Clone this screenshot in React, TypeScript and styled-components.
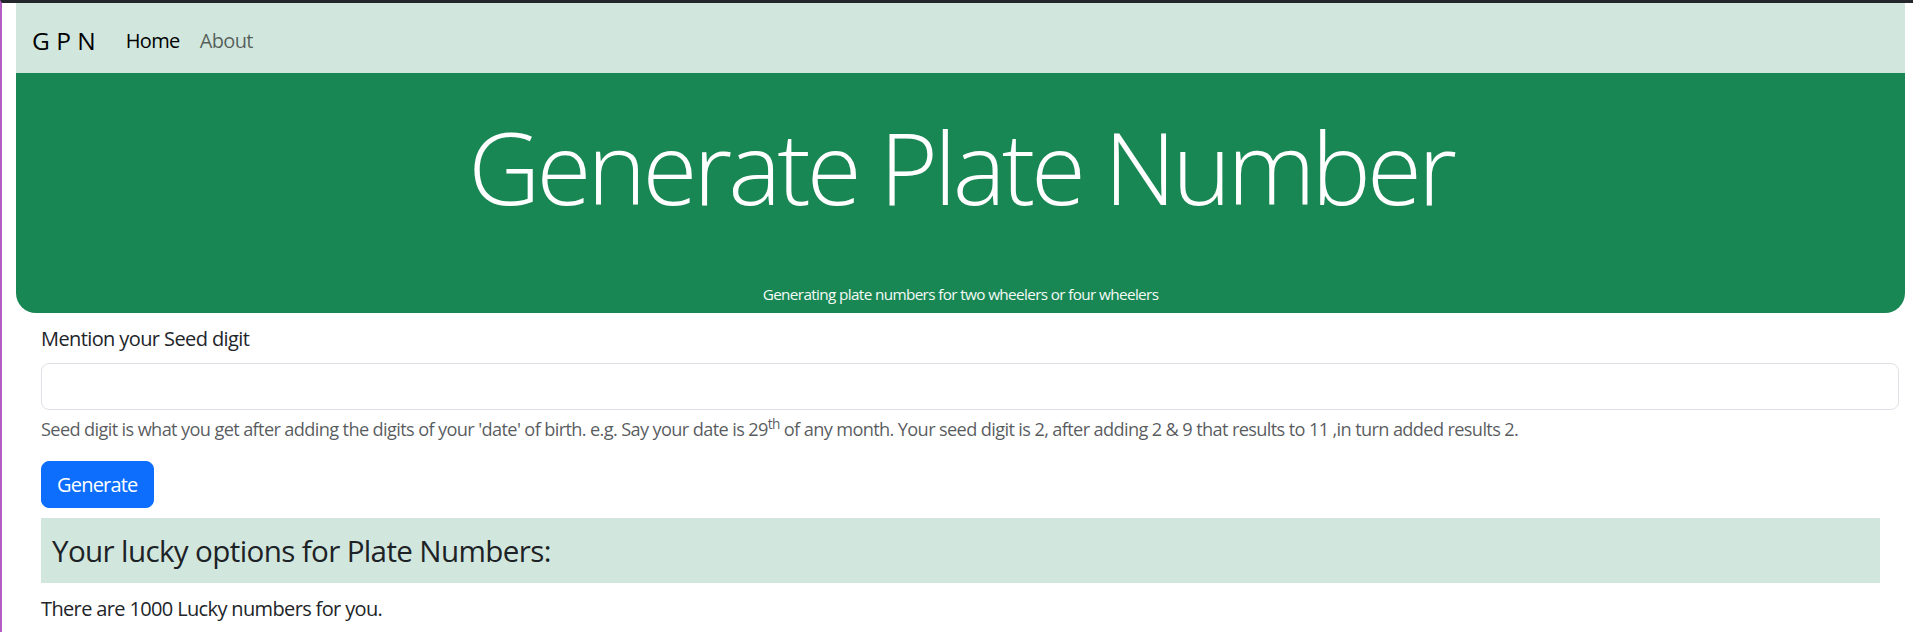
import React from "react";
import styled, { createGlobalStyle } from "styled-components";

const GlobalStyle = createGlobalStyle`
  *, *::before, *::after { box-sizing: border-box; }
  html, body { margin: 0; padding: 0; background: #fff; }
  body {
    font-family: "Open Sans", "Liberation Sans", sans-serif;
    color: #212529;
    letter-spacing: -0.04em;
  }
`;

const Frame = styled.div`
  min-height: 632px;
  border-top: 3px solid #23262a;
  border-left: 2px solid #b35cc4;
  padding: 0 8px 0 14px;
`;

const Navbar = styled.nav`
  height: 70px;
  background: #d1e7dd;
  display: flex;
  align-items: center;
  padding: 4px 16px 0;
`;

const Brand = styled.a`
  font-size: 24.5px;
  letter-spacing: 0;
  color: #000;
  text-decoration: none;
  margin-right: 20px;
  white-space: pre;
`;

const NavLink = styled.a<{ $active?: boolean }>`
  font-size: 20px;
  padding: 0 10px;
  text-decoration: none;
  color: ${(p) => (p.$active ? "#000" : "rgba(0, 0, 0, 0.6)")};
`;

const Hero = styled.header`
  background: #198754;
  color: #fff;
  text-align: center;
  border-radius: 0 0 20px 20px;
  height: 240px;
  padding-top: 33px;
  display: flex;
  flex-direction: column;
  align-items: center;
`;

const Title = styled.h1`
  margin: 0;
  font-size: 100px;
  font-weight: 300;
  line-height: 120px;
  letter-spacing: -0.04em;
`;

const Tagline = styled.p`
  margin: 56px 0 0;
  font-size: 15.3px;
  line-height: 25px;
  color: #f4faf7;
`;

const Main = styled.main`
  padding: 11px 6px 0 25px;
`;

const Label = styled.label`
  display: block;
  font-size: 20px;
  line-height: 30px;
  margin-bottom: 9px;
  letter-spacing: -0.03em;
`;

const Input = styled.input`
  display: block;
  width: 100%;
  height: 47px;
  border: 1px solid #dee2e6;
  border-radius: 8px;
  padding: 0 15px;
  font: inherit;
  font-size: 20px;
  outline: none;
`;

const Help = styled.div`
  margin-top: 6px;
  font-size: 18.2px;
  line-height: 26px;
  color: rgba(33, 37, 41, 0.75);

  sup {
    font-size: 0.75em;
    line-height: 0;
    position: relative;
    vertical-align: baseline;
    top: -0.5em;
  }
`;

const Button = styled.button`
  margin-top: 19px;
  height: 47px;
  padding: 0 15px;
  background: #0d6efd;
  color: #fff;
  border: 1px solid #0d6efd;
  border-radius: 8px;
  font-family: inherit;
  font-size: 20px;
  letter-spacing: -0.04em;
  cursor: pointer;
`;

const Alert = styled.section`
  margin: 10px 19px 0 0;
  background: #d1e7dd;
  padding: 15px 11px 14px;
`;

const AlertHeading = styled.h4`
  margin: 0;
  font-size: 29.6px;
  line-height: 36px;
  font-weight: 400;
  color: #1d2226;
`;

const Info = styled.p`
  margin: 11px 0 0;
  font-size: 20px;
  line-height: 30px;
`;

export default function App() {
  return (
    <>
      <GlobalStyle />
      <Frame>
        <Navbar>
          <Brand href="#">G P N</Brand>
          <NavLink href="#" $active>
            Home
          </NavLink>
          <NavLink href="#">About</NavLink>
        </Navbar>
        <Hero>
          <Title>Generate Plate Number</Title>
          <Tagline>Generating plate numbers for two wheelers or four wheelers</Tagline>
        </Hero>
        <Main>
          <Label htmlFor="seed">Mention your Seed digit</Label>
          <Input id="seed" type="text" />
          <Help>
            Seed digit is what you get after adding the digits of your 'date' of birth. e.g. Say your date is 29
            <sup>th</sup> of any month. Your seed digit is 2, after adding 2 &amp; 9 that results to 11 ,in turn added
            results 2.
          </Help>
          <Button type="button">Generate</Button>
          <Alert>
            <AlertHeading>Your lucky options for Plate Numbers:</AlertHeading>
          </Alert>
          <Info>There are 1000 Lucky numbers for you.</Info>
        </Main>
      </Frame>
    </>
  );
}
